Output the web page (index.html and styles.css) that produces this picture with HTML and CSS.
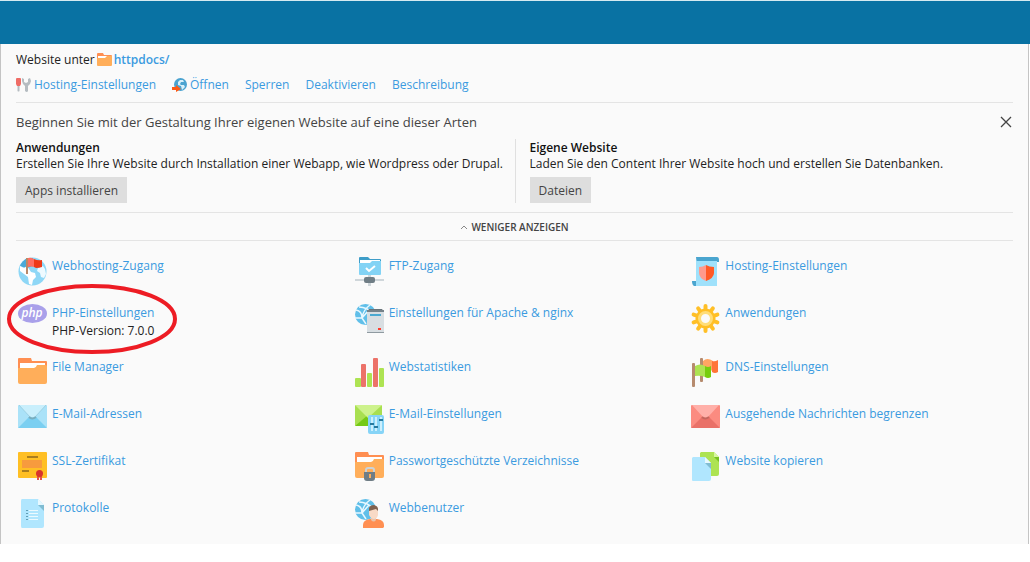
FILE: index.html
```
<!DOCTYPE html>
<html lang="de">
<head>
  <meta charset="UTF-8">
  <title>Website-Verwaltung</title>
  <link rel="stylesheet" href="styles.css">
</head>
<body>

  <header class="topbar"></header>

  <main class="panel">
    <div class="content">

      <section class="site-info">
        <div class="site-root">
          <span>Website unter</span>
          <svg class="icon-small" viewBox="0 0 15 14" aria-hidden="true">
            <path d="M0 1q0-1 1-1h5l1 2h7q1 0 1 1v5h-15z" fill="#ff8f52"/>
            <path d="M1 3h13v4h-13z" fill="#fff"/>
            <path d="M0 5h8l2-2h5v9q0 1-1 1h-13q-1 0-1-1z" fill="#ffae5a"/>
          </svg>
          <a class="root-link" href="#">httpdocs/</a>
        </div>

        <nav class="site-actions">
          <a href="#">
            <svg class="icon-small" viewBox="0 0 15 14" aria-hidden="true">
              <path d="M1 0h3q1 0 1 1v5l-1 2h-3l-1-2v-5q0-1 1-1z" fill="#ef6c66"/>
              <path d="M1.500 8h2v5q-1 1-2 0z" fill="#b5bcc1"/>
              <path d="M6 0l2 1v3l2 1 2-1v-3l2-1 1 3-1 3-2 2v5q-1 2-3 0v-5l-2-2-1-3z" fill="#b5bcc1"/>
            </svg>
            Hosting-Einstellungen
          </a>
          <a href="#">
            <svg class="icon-small" viewBox="0 0 15 14" aria-hidden="true">
              <circle cx="8.500" cy="6.500" r="6.500" fill="#4ba3d0"/>
              <path d="M8 2l3 0 1 2-3 0-1 2 1 1h3l1 2-3 3-1-4-3-1 0-3z" fill="#d8f0fa"/>
              <path d="M0 9h4v-2l5 4-5 3v-2h-4z" fill="#ff5a14"/>
            </svg>
            Öffnen
          </a>
          <a href="#">Sperren</a>
          <a href="#">Deaktivieren</a>
          <a href="#">Beschreibung</a>
        </nav>
      </section>

      <section class="start">
        <div class="start-head">
          <h1>Beginnen Sie mit der Gestaltung Ihrer eigenen Website auf eine dieser Arten</h1>
          <button class="close" type="button" aria-label="Schließen">
            <svg viewBox="0 0 12 12" aria-hidden="true"><path d="M1 1l10 10M11 1l-10 10" stroke="#444" stroke-width="1.300"/></svg>
          </button>
        </div>

        <div class="start-options">
          <div class="option">
            <h2>Anwendungen</h2>
            <p>Erstellen Sie Ihre Website durch Installation einer Webapp, wie Wordpress oder Drupal.</p>
            <button class="btn" type="button">Apps installieren</button>
          </div>
          <div class="option">
            <h2>Eigene Website</h2>
            <p>Laden Sie den Content Ihrer Website hoch und erstellen Sie Datenbanken.</p>
            <button class="btn" type="button">Dateien</button>
          </div>
        </div>
      </section>

      <button class="toggle" type="button">
        <svg viewBox="0 0 8 6" aria-hidden="true"><path d="M1 5l3-3 3 3" fill="none" stroke="#888"/></svg>
        WENIGER ANZEIGEN
      </button>
    </div>

    <ul class="tools">
      <li class="tool">
        <svg class="icon" viewBox="0 0 29 29" aria-hidden="true">
          <circle cx="14.500" cy="14.500" r="14" fill="#8ed7f6"/>
          <path d="M2 9q2-5 7-8h6v8l-6 2-4-1z" fill="#4ba9d8"/>
          <path d="M2 9l4 2 3-2 4 6 4 1 1 4-3 3-1 5-3-1-1-7-4-3-4-3z" fill="#fff"/>
          <path d="M20 11l5-2 2 3 1 5-2 4-3-1-1-4-3-2z" fill="#eefaff"/>
          <path d="M8 1h2v16h-2z" fill="#b98968"/>
          <path d="M10 1q3-1 6 1v8q-3-1-6 0z" fill="#ff6e62"/>
          <path d="M16 2q4 2 8 1v7q-3 1-6 1l-2-1z" fill="#ee3a18"/>
        </svg>
        <div><a href="#">Webhosting-Zugang</a></div>
      </li>
      <li class="tool">
        <svg class="icon" viewBox="0 0 29 29" aria-hidden="true">
          <path d="M4 1q0-1 1-1h8l2 2h10q1 0 1 1v7h-22z" fill="#3e9dc8"/>
          <path d="M5 3h20v4h-20z" fill="#fff"/>
          <path d="M4 6h11l2-2h9v13q0 1-1 1h-20q-1 0-1-1z" fill="#83d3f5"/>
          <path d="M11 11l3 3 6-5" fill="none" stroke="#fff" stroke-width="2"/>
          <path d="M13 18h3v11h-3z" fill="#cfd6da"/>
          <path d="M0 22h29v2h-29z" fill="#cfd6da"/>
          <rect x="9" y="20" width="11" height="6" rx="2" fill="#6f7d85"/>
        </svg>
        <div><a href="#">FTP-Zugang</a></div>
      </li>
      <li class="tool">
        <svg class="icon" viewBox="0 0 29 29" aria-hidden="true">
          <path d="M5 3h21v26h-23q2-1 2-5z" fill="#9fe1fb"/>
          <path d="M5 0h21q2 0 2 3v2h-2v-1h-20q-1-1-1-4z" fill="#4aa5cf"/>
          <path d="M1 24h4v5h-2q-2-1-2-5z" fill="#4aa5cf"/>
          <path d="M15 8q-3 2-7 2v6q0 5 7 8z" fill="#ff9a8c"/>
          <path d="M15 8q3 2 8 2v6q0 5-8 8z" fill="#ff5a26"/>
        </svg>
        <div><a href="#">Hosting-Einstellungen</a></div>
      </li>

      <li class="tool tool-marked">
        <svg class="icon" viewBox="0 0 29 29" aria-hidden="true">
          <ellipse cx="14.500" cy="9.500" rx="14.500" ry="9.500" fill="#a9a0ea"/>
          <text class="php-logo" x="14" y="13" text-anchor="middle">php</text>
        </svg>
        <div>
          <a href="#">PHP-Einstellungen</a>
          <p>PHP-Version: 7.0.0</p>
        </div>
        <svg class="marker" viewBox="0 0 172 72" aria-hidden="true">
          <ellipse cx="86" cy="36" rx="83" ry="33" fill="none" stroke="#ed1c24" stroke-width="4"/>
        </svg>
      </li>
      <li class="tool">
        <svg class="icon" viewBox="0 0 29 29" aria-hidden="true">
          <circle cx="10.500" cy="10.500" r="10.500" fill="#60bfe9"/>
          <path d="M1 6q6 1 6 8l4 6M7 14q1-8 8-13M4 3q8 0 15 7M0 14h7l7-8" fill="none" stroke="#e8f8ff" stroke-width="1.500"/>
          <path d="M12 8l2-3h13l2 3z" fill="#68747b"/>
          <path d="M12 7h17v22h-17z" fill="#d8dee2"/>
          <path d="M12 6h17v2h-17z" fill="#75828a"/>
          <path d="M12 28h17v1h-17z" fill="#8f9aa0"/>
          <path d="M15 10h11v2h-11z" fill="#4ba9d1"/>
          <path d="M23 24h3v2h-3z" fill="#ff3d2e"/>
        </svg>
        <div><a href="#">Einstellungen für Apache &amp; nginx</a></div>
      </li>
      <li class="tool">
        <svg class="icon" viewBox="0 0 29 29" aria-hidden="true">
          <g stroke="#ffbf26" stroke-width="4" stroke-linecap="round">
            <path d="M14.500 2v25"/>
            <path d="M14.500 2v25" transform="rotate(36 14.500 14.500)"/>
            <path d="M14.500 2v25" transform="rotate(72 14.500 14.500)"/>
            <path d="M14.500 2v25" transform="rotate(108 14.500 14.500)"/>
            <path d="M14.500 2v25" transform="rotate(144 14.500 14.500)"/>
          </g>
          <circle cx="14.500" cy="14.500" r="10" fill="#ffbf26"/>
          <circle cx="14.500" cy="14.500" r="6" fill="#fafafa" stroke="#ffdd78" stroke-width="3"/>
        </svg>
        <div><a href="#">Anwendungen</a></div>
      </li>

      <li class="tool">
        <svg class="icon" viewBox="0 0 29 29" aria-hidden="true">
          <path d="M0 1q0-1 1-1h12l1 3h14q1 0 1 1v8h-29z" fill="#ff8f52"/>
          <path d="M2 5h25v5h-25z" fill="#fff"/>
          <path d="M0 10h16q2 0 3-3h9l1 1v16q0 2-2 2h-25q-2 0-2-2z" fill="#ffae5a"/>
        </svg>
        <div><a href="#">File Manager</a></div>
      </li>
      <li class="tool">
        <svg class="icon" viewBox="0 0 29 29" aria-hidden="true">
          <g fill="#ade352">
            <rect x="0" y="20" width="6" height="9" rx="1"/>
            <rect x="12" y="15" width="5" height="14" rx="1"/>
            <rect x="24" y="10" width="5" height="19" rx="1"/>
          </g>
          <g fill="#ec7269">
            <rect x="6" y="6" width="5" height="23" rx="1"/>
            <rect x="18" y="0" width="5" height="29" rx="1"/>
          </g>
        </svg>
        <div><a href="#">Webstatistiken</a></div>
      </li>
      <li class="tool">
        <svg class="icon" viewBox="0 0 29 29" aria-hidden="true">
          <rect x="9" y="0" width="3" height="24" rx="1" fill="#b68b6e"/>
          <path d="M12 3q4-4 10 0v10q-4-2-10 2z" fill="#ffa662"/>
          <path d="M21 3q3 1 6-1v12q-3 2-6 0z" fill="#ff7438"/>
          <rect x="1" y="5" width="3" height="24" rx="1" fill="#b68b6e"/>
          <path d="M4 8q5-3 10 0v11q-5-2-10-1z" fill="#ade352"/>
          <path d="M14 8q3 2 6 0v11q-3 2-6 0z" fill="#76cd0c"/>
        </svg>
        <div><a href="#">DNS-Einstellungen</a></div>
      </li>

      <li class="tool">
        <svg class="icon" viewBox="0 0 29 29" aria-hidden="true">
          <rect x="0" y="0" width="29" height="23" rx="1" fill="#aae2f8"/>
          <path d="M0 23l11-11h7l11 11z" fill="#7bcff1"/>
          <path d="M1 0h27l-11 12q-2 2-5 0z" fill="#c9effc"/>
          <path d="M1 0l11 12q2 2 5 0l11-12" fill="none" stroke="#86bccf" opacity=".5"/>
          <path d="M11 12q3 3 7 0" fill="none" stroke="#79aebf" stroke-width="2"/>
        </svg>
        <div><a href="#">E-Mail-Adressen</a></div>
      </li>
      <li class="tool">
        <svg class="icon" viewBox="0 0 29 29" aria-hidden="true">
          <rect x="0" y="0" width="27" height="21" rx="1" fill="#a8df50"/>
          <path d="M0 21l13-11 14 11z" fill="#75c915"/>
          <path d="M0 0h27l-14 13z" fill="#cdf28c"/>
          <rect x="13" y="10" width="16" height="19" rx="2" fill="#86d4f7"/>
          <path d="M17 12v14M21 12v14M26 12v14" stroke="#e3f7ff" stroke-width="1.500"/>
          <path d="M15 19h4M19 22h4M24 15h4" stroke="#26799e" stroke-width="2"/>
        </svg>
        <div><a href="#">E-Mail-Einstellungen</a></div>
      </li>
      <li class="tool">
        <svg class="icon" viewBox="0 0 29 29" aria-hidden="true">
          <rect x="0" y="0" width="29" height="23" rx="1" fill="#fb8b80"/>
          <path d="M0 23l11-11h7l11 11z" fill="#e97168"/>
          <path d="M1 0h27l-11 12q-2 2-5 0z" fill="#ffb0a9"/>
          <path d="M11 12q3 3 7 0" fill="none" stroke="#c4675e" stroke-width="2"/>
        </svg>
        <div><a href="#">Ausgehende Nachrichten begrenzen</a></div>
      </li>

      <li class="tool">
        <svg class="icon" viewBox="0 0 29 29" aria-hidden="true">
          <rect x="0" y="0" width="29" height="26" rx="1" fill="#ffbf24"/>
          <path d="M4 8h20v8h-20z" fill="#f79b3e"/>
          <path d="M9 5h11M4 19h7" stroke="#8f681d" stroke-width="1.500"/>
          <path d="M19 22h2v6h-2zM22 22h2v6h-2z" fill="#e5534b"/>
          <circle cx="21.500" cy="21.500" r="3.500" fill="#d8342c"/>
        </svg>
        <div><a href="#">SSL-Zertifikat</a></div>
      </li>
      <li class="tool">
        <svg class="icon" viewBox="0 0 29 29" aria-hidden="true">
          <path d="M0 1q0-1 1-1h12l1 3h14q1 0 1 1v8h-29z" fill="#ff8f52"/>
          <path d="M2 5h25v5h-25z" fill="#fff"/>
          <path d="M0 10h16q2 0 3-3h9l1 1v16q0 2-2 2h-25q-2 0-2-2z" fill="#ffae5a"/>
          <path d="M11 20v-2q0-2 2-2h4q2 0 2 2v2" fill="none" stroke="#cbd2d6" stroke-width="2"/>
          <path d="M9 20h11v6q0 3-3 3h-5q-3 0-3-3z" fill="#6f7d85"/>
          <path d="M14 22h2v4h-2z" fill="#ffae5a"/>
        </svg>
        <div><a href="#">Passwortgeschützte Verzeichnisse</a></div>
      </li>
      <li class="tool">
        <svg class="icon" viewBox="0 0 29 29" aria-hidden="true">
          <path d="M10 0h13l5 5v17q0 2-2 2h-16q-1 0-1-1v-22z" fill="#ade352"/>
          <path d="M23 5h5v5z" fill="#76c21f"/>
          <path d="M23 0l5 5h-5z" fill="#d7f5a0"/>
          <path d="M2 5h12l6 6v16q0 2-2 2h-16q-1 0-1-1v-22z" fill="#b0e6fe"/>
          <path d="M14 11h6v6z" fill="#80bcd2"/>
          <path d="M14 5l6 6h-6z" fill="#e6f8ff"/>
        </svg>
        <div><a href="#">Website kopieren</a></div>
      </li>

      <li class="tool">
        <svg class="icon" viewBox="0 0 29 29" aria-hidden="true">
          <path d="M4 0h16l6 6v21q0 2-2 2h-20q-1 0-1-2v-25q0-2 1-2z" fill="#b0e6fe"/>
          <path d="M20 6h6v6z" fill="#80bcd2"/>
          <path d="M20 0l6 6h-6z" fill="#e6f8ff"/>
          <path d="M11 11.500h9M11 14.500h9M11 17.500h9M11 20.500h9" stroke="#ecfaff"/>
          <path d="M8 11.500h2M8 14.500h2M8 17.500h2M8 20.500h2" stroke="#619eb5"/>
        </svg>
        <div><a href="#">Protokolle</a></div>
      </li>
      <li class="tool">
        <svg class="icon" viewBox="0 0 29 29" aria-hidden="true">
          <circle cx="10.500" cy="10.500" r="10.500" fill="#60bfe9"/>
          <path d="M1 6q6 1 6 8l4 6M7 14q1-8 8-13M4 3q8 0 15 7M0 14h7l7-8" fill="none" stroke="#e8f8ff" stroke-width="1.500"/>
          <path d="M8 29v-3q0-5 7-6h7q7 1 7 6v2l-1 1z" fill="#ff8f52"/>
          <path d="M16 17h5v4q-2 3-5 0z" fill="#eac4ab"/>
          <path d="M14 9h9v7q-1 4-4 4t-5-4z" fill="#f9dac6"/>
          <path d="M14 12v-3q1-3 5-3 4 1 4 4v2l-2-2z" fill="#80624f"/>
        </svg>
        <div><a href="#">Webbenutzer</a></div>
      </li>
    </ul>
  </main>

</body>
</html>
```
FILE: styles.css
```
* {
  box-sizing: border-box;
}

body {
  margin: 0;
  background: #fff;
  color: #222;
  font-family: "Open Sans", "Liberation Sans", sans-serif;
  font-size: 12px;
  line-height: 18px;
}

h1, h2, p, ul {
  margin: 0;
  padding: 0;
}

a {
  color: #3b9be0;
  text-decoration: none;
}

button {
  border: 0;
  font-family: inherit;
  cursor: pointer;
}

svg {
  display: block;
  flex: none;
}

.topbar {
  height: 44px;
  border-top: 1px solid #d5eaf1;
  background: #0972a3;
}

.panel {
  margin-right: 1px;
  padding-bottom: 16px;
  border: 1px solid #c4c4c4;
  border-width: 0 1px;
  background: #fafafa;
}

.content {
  padding: 0 15px;
}

/* Website root and actions */
.site-info {
  display: flex;
  flex-direction: column;
  gap: 7px;
  padding: 7px 0 8px;
  border-bottom: 1px solid #e4e4e4;
}

.site-root {
  display: flex;
  align-items: center;
  gap: 2px;
}

.root-link {
  font-weight: 600;
}

.icon-small {
  width: 15px;
  height: 14px;
}

.site-actions {
  display: flex;
  gap: 16px;
}

.site-actions a {
  display: flex;
  align-items: center;
  gap: 3px;
}

/* Getting started */
.start {
  padding: 9px 0;
  border-bottom: 1px solid #e4e4e4;
}

.start-head {
  display: flex;
  align-items: center;
  justify-content: space-between;
  height: 20px;
  margin-bottom: 7px;
}

.start-head h1 {
  color: #444;
  font-size: 13px;
  font-weight: 400;
}

.close {
  padding: 1px;
  background: none;
}

.close svg {
  width: 12px;
  height: 12px;
}

.start-options {
  display: grid;
  grid-template-columns: 1fr 1fr;
}

.option {
  padding-top: 1px;
  line-height: 16px;
}

.option + .option {
  padding-left: 14px;
  border-left: 1px solid #e0e0e0;
}

.option h2 {
  color: #111;
  font-size: 12px;
  font-weight: 600;
}

.btn {
  height: 26px;
  margin-top: 5px;
  padding: 0 9px;
  background: #dedede;
  color: #444;
  font-size: 12px;
}

.toggle {
  display: flex;
  align-items: center;
  justify-content: center;
  gap: 3px;
  width: 100%;
  height: 28px;
  padding: 0;
  border-bottom: 1px solid #e4e4e4;
  background: none;
  color: #444;
  font-size: 10px;
  font-weight: 600;
}

.toggle svg {
  width: 8px;
  height: 6px;
}

/* Tool list */
.tools {
  display: grid;
  grid-template-columns: repeat(3, 1fr);
  row-gap: 18px;
  padding: 16px 0 0 17px;
  list-style: none;
}

.tool {
  display: flex;
  gap: 5px;
}

.icon {
  width: 29px;
  height: 29px;
}

.php-logo {
  fill: #fff;
  font-size: 12px;
  font-style: italic;
  font-weight: 600;
}

.tool-marked {
  position: relative;
}

.marker {
  position: absolute;
  top: -21px;
  left: -12px;
  width: 172px;
  height: 72px;
  pointer-events: none;
}
```
